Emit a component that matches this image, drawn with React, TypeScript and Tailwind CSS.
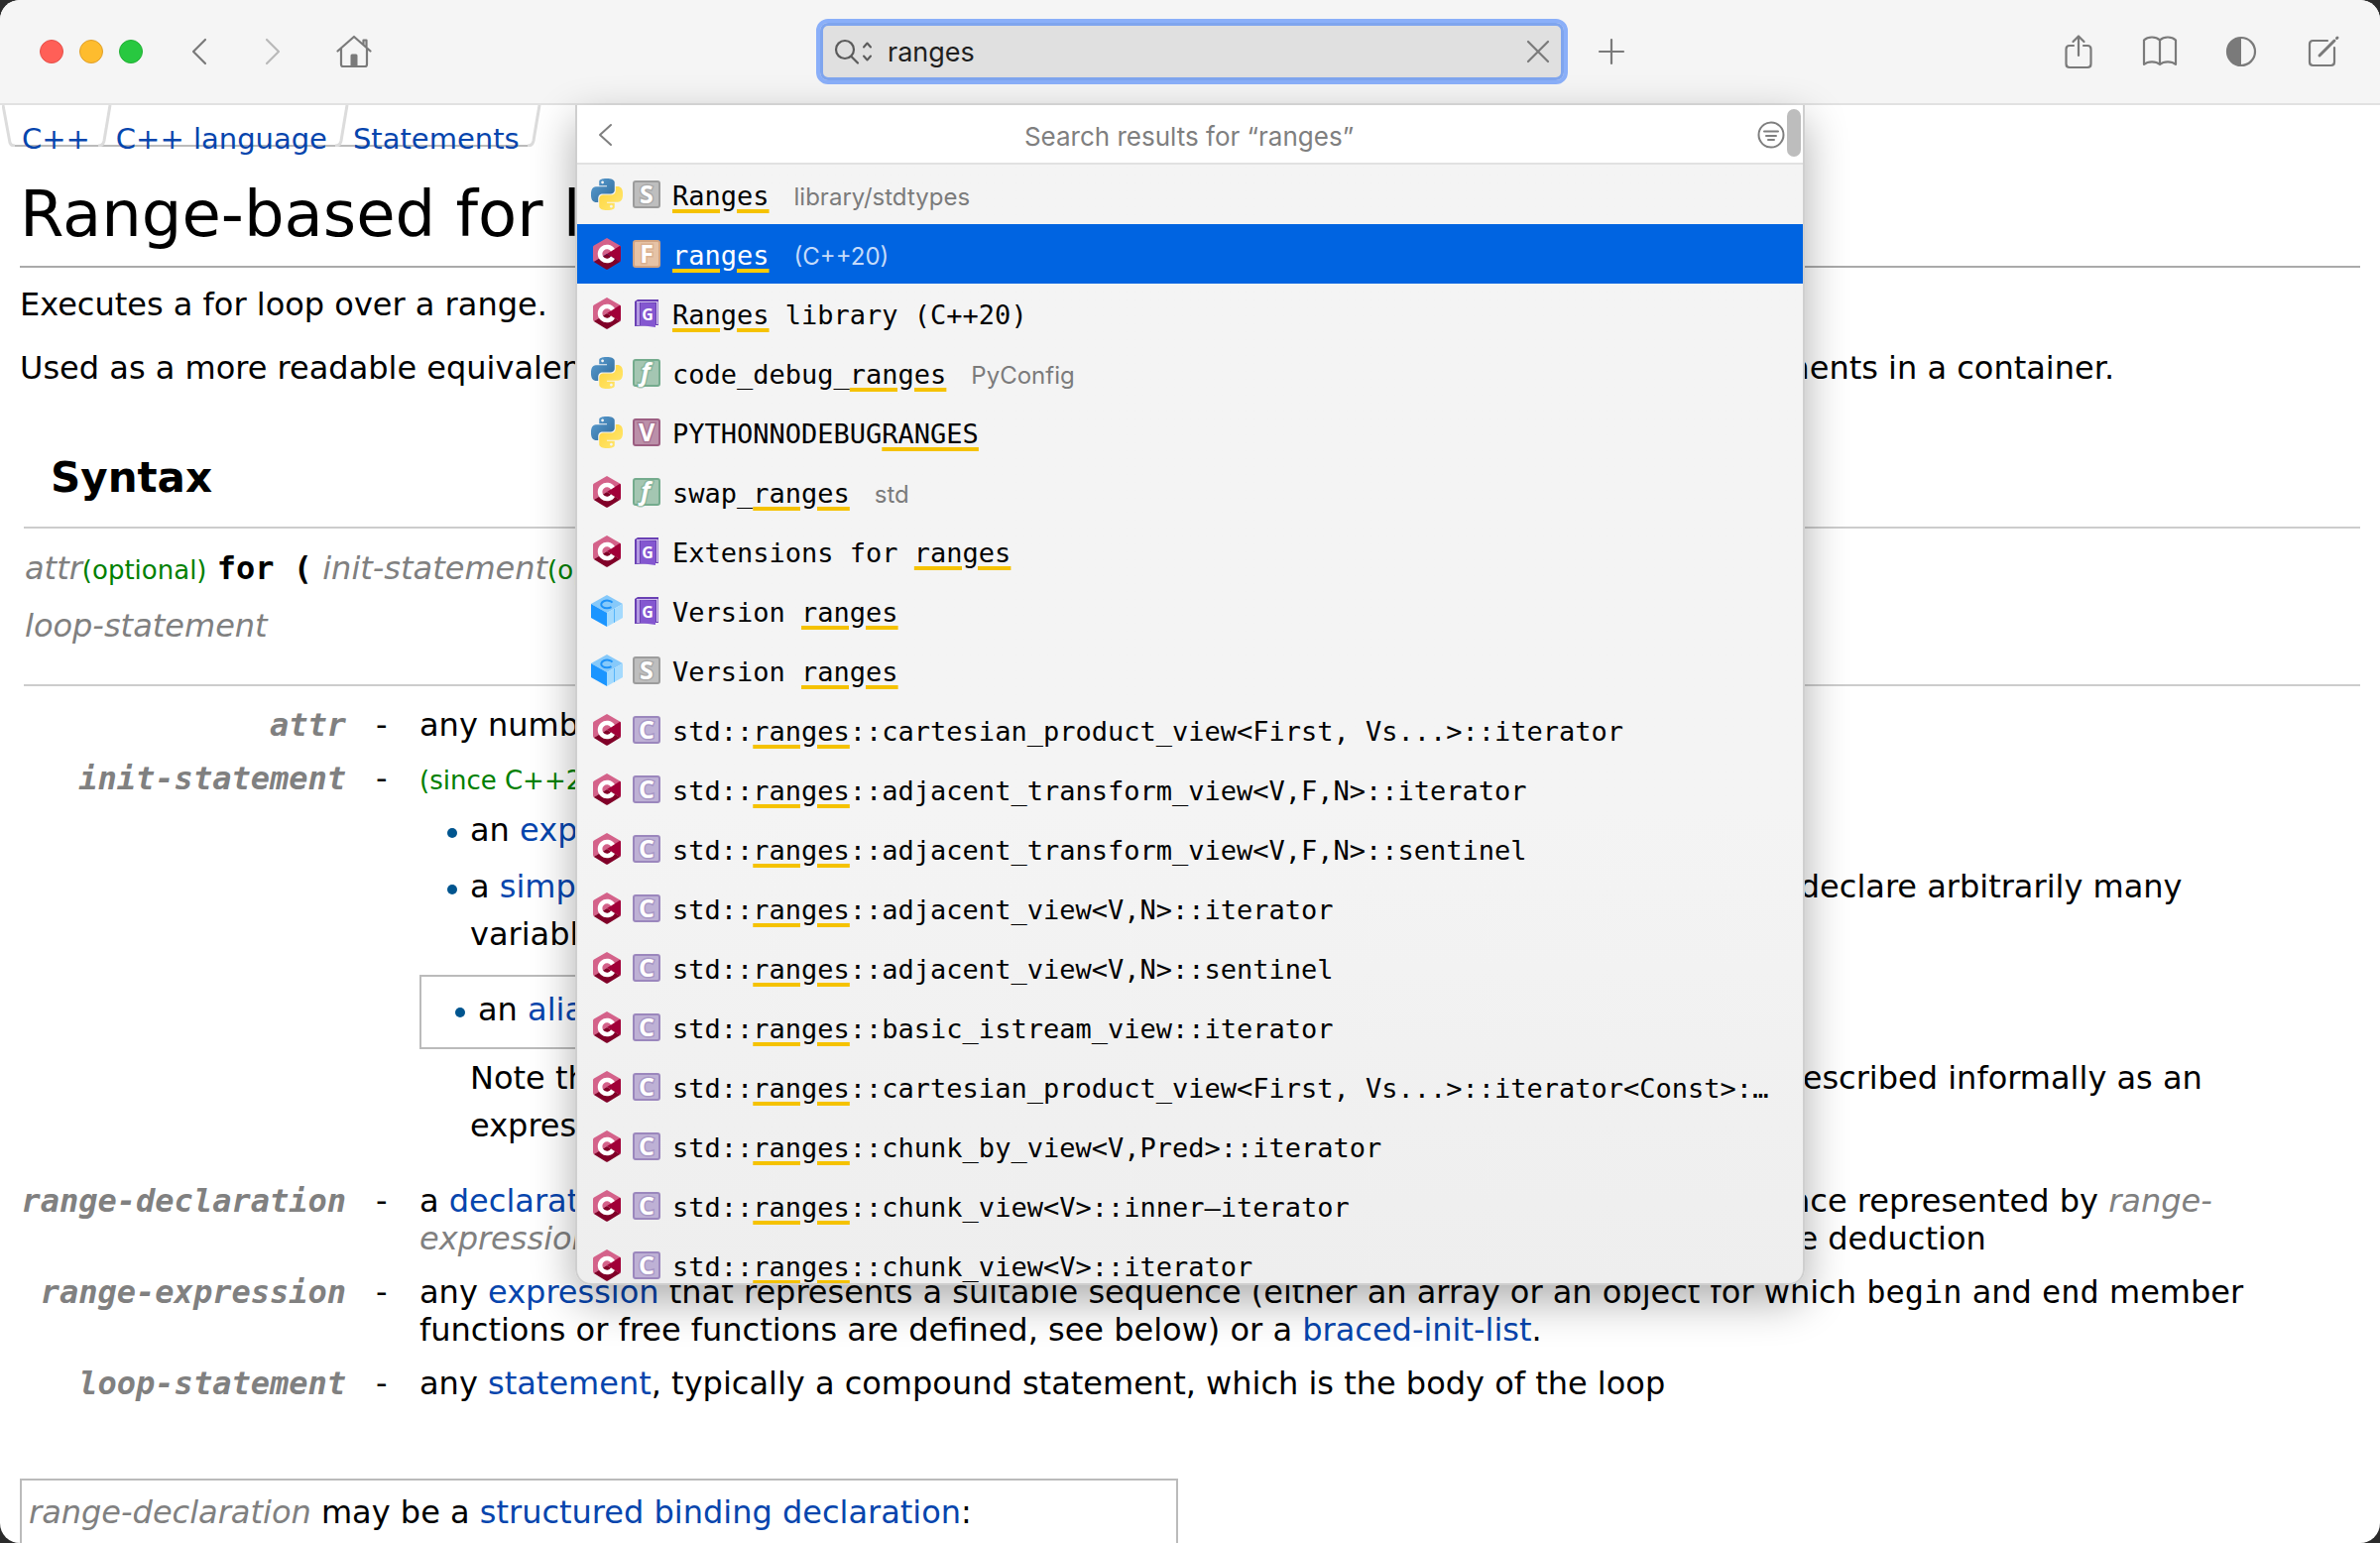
import React from "react";

type Lang = "py" | "cpp" | "cube";
type Kind = "S" | "F" | "G" | "f" | "V" | "C";
type Result = { lang: Lang; kind: Kind; before?: string; hit: string; after?: string; note?: string };

const RESULTS: Result[] = [
  { lang: "py", kind: "S", hit: "Ranges", note: "library/stdtypes" },
  { lang: "cpp", kind: "F", hit: "ranges", note: "(C++20)" },
  { lang: "cpp", kind: "G", hit: "Ranges", after: " library (C++20)" },
  { lang: "py", kind: "f", before: "code_debug_", hit: "ranges", note: "PyConfig" },
  { lang: "py", kind: "V", before: "PYTHONNODEBUG", hit: "RANGES" },
  { lang: "cpp", kind: "f", before: "swap_", hit: "ranges", note: "std" },
  { lang: "cpp", kind: "G", before: "Extensions for ", hit: "ranges" },
  { lang: "cube", kind: "G", before: "Version ", hit: "ranges" },
  { lang: "cube", kind: "S", before: "Version ", hit: "ranges" },
  { lang: "cpp", kind: "C", before: "std::", hit: "ranges", after: "::cartesian_product_view<First, Vs...>::iterator" },
  { lang: "cpp", kind: "C", before: "std::", hit: "ranges", after: "::adjacent_transform_view<V,F,N>::iterator" },
  { lang: "cpp", kind: "C", before: "std::", hit: "ranges", after: "::adjacent_transform_view<V,F,N>::sentinel" },
  { lang: "cpp", kind: "C", before: "std::", hit: "ranges", after: "::adjacent_view<V,N>::iterator" },
  { lang: "cpp", kind: "C", before: "std::", hit: "ranges", after: "::adjacent_view<V,N>::sentinel" },
  { lang: "cpp", kind: "C", before: "std::", hit: "ranges", after: "::basic_istream_view::iterator" },
  { lang: "cpp", kind: "C", before: "std::", hit: "ranges", after: "::cartesian_product_view<First, Vs...>::iterator<Const>:…" },
  { lang: "cpp", kind: "C", before: "std::", hit: "ranges", after: "::chunk_by_view<V,Pred>::iterator" },
  { lang: "cpp", kind: "C", before: "std::", hit: "ranges", after: "::chunk_view<V>::inner–iterator" },
  { lang: "cpp", kind: "C", before: "std::", hit: "ranges", after: "::chunk_view<V>::iterator" },
];

const SNAKE =
  "M14.25.18l.9.2.73.26.59.3.45.32.34.34.25.34.16.33.1.3.04.26.02.2-.01.13V8.5l-.05.63-.13.55-.21.46-.26.38-.3.31-.33.25-.35.19-.35.14-.33.1-.3.07-.26.04-.21.02H8.77l-.69.05-.59.14-.5.22-.41.27-.33.32-.27.35-.2.36-.15.37-.1.35-.07.32-.04.27-.02.21v3.06H3.17l-.21-.03-.28-.07-.32-.12-.35-.18-.36-.26-.36-.36-.35-.46-.32-.59-.28-.73-.21-.88-.14-1.05-.05-1.23.06-1.22.16-1.04.24-.87.32-.71.36-.57.4-.44.42-.33.42-.24.4-.16.36-.1.32-.05.24-.01h.16l.06.01h8.16v-.83H6.18l-.01-2.75-.02-.37.05-.34.11-.31.17-.28.25-.26.31-.23.38-.2.44-.18.51-.15.58-.12.64-.1.71-.06.77-.04.84-.02 1.27.05zm-6.3 1.98l-.23.33-.08.41.08.41.23.34.33.22.41.09.41-.09.33-.22.23-.34.08-.41-.08-.41-.23-.33-.33-.22-.41-.09-.41.09z";

function LangIcon({ lang }: { lang: Lang }) {
  if (lang === "py")
    return (
      <svg className="size-8 shrink-0" viewBox="0 0 24 24" aria-hidden="true">
        <defs>
          <linearGradient id="pyBlue" x1="0" y1="0" x2="1" y2="1">
            <stop offset="0" stopColor="#5a9fd4" />
            <stop offset="1" stopColor="#306998" />
          </linearGradient>
          <linearGradient id="pyYellow" x1="1" y1="1" x2="0" y2="0">
            <stop offset="0" stopColor="#ffd43b" />
            <stop offset="1" stopColor="#ffe873" />
          </linearGradient>
        </defs>
        <path d={SNAKE} fill="url(#pyBlue)" />
        <path d={SNAKE} fill="url(#pyYellow)" transform="rotate(180 12 12)" />
      </svg>
    );
  if (lang === "cpp")
    return (
      <svg className="size-8 shrink-0" viewBox="0 0 32 32" aria-hidden="true">
        <path d="M16 0 29 7.400Q30 8 30 9V16L16 16 3 24Q2 23.500 2 22V9Q2 8 3 7.400Z" fill="#d4628a" />
        <path d="M29.200 7.800Q30 8.500 30 9.500V22Q30 23.500 29.200 24.200L16 16Z" fill="#a10038" />
        <path d="M2.800 24 16 16 29.200 24 17 31.600Q16 32 15 31.600Z" fill="#800028" />
        <path d="M22 12.300A7 7 0 1 0 22 19.700" fill="none" stroke="#fff" strokeWidth="4.600" />
      </svg>
    );
  return (
    <svg className="size-8 shrink-0" viewBox="0 0 32 32" aria-hidden="true">
      <path d="M16 0 32 9 16 18 0 9Z" fill="#86c9fa" />
      <path d="M0 9 16 18V32L0 23Z" fill="#1b95ff" />
      <path d="M16 18 32 9V23L16 32Z" fill="#a5dafd" />
      <path d="M23.500 13.800V27.800" stroke="#57b6fa" strokeWidth="1" />
      <path d="M20.500 12.200A6 3.900 0 1 1 21.500 7.600" fill="none" stroke="#1d92f8" strokeWidth="2" />
    </svg>
  );
}

const BADGE: Record<Exclude<Kind, "G">, { fill: string; edge: string }> = {
  S: { fill: "#bebebe", edge: "#9c9c9c" },
  F: { fill: "#e6c3a6", edge: "#d2a482" },
  f: { fill: "#a4c6b2", edge: "#74ab8d" },
  V: { fill: "#bb90a9", edge: "#9c5e82" },
  C: { fill: "#beb1d5", edge: "#9b87bd" },
};

function KindIcon({ kind }: { kind: Kind }) {
  if (kind === "G")
    return (
      <svg className="size-7 shrink-0 overflow-visible" viewBox="0 0 28 28" aria-hidden="true">
        <path d="M2 2 5 0H26V26H23L2 27Z" fill="#6a40b4" />
        <path d="M24 2H25.500V25H24Z" fill="#d9ccef" />
        <path d="M4 3H7V26H4Z" fill="#b59be2" />
        <path d="M4 2H24V3H4Z" fill="#cdbcec" />
        <path d="M8 3 23 4V28L8 26Z" fill="#8457d0" />
        <text x="15" y="21" textAnchor="middle" fontFamily="Open Sans, sans-serif" fontWeight="700" fontSize="16" fill="#fff">
          G
        </text>
      </svg>
    );
  const { fill, edge } = BADGE[kind];
  return (
    <svg className="size-7 shrink-0 overflow-visible" viewBox="0 0 28 28" aria-hidden="true">
      <rect x="1" y="1" width="26" height="26" rx="2" fill={fill} stroke={edge} strokeWidth="2" />
      <text
        x={kind === "f" ? 13 : 14}
        y={kind === "f" ? 22 : 23}
        textAnchor="middle"
        fontFamily="Open Sans, sans-serif"
        fontWeight="700"
        fontSize="25"
        fontStyle={kind === "f" ? "italic" : "normal"}
        fill="#fff"
        stroke={edge}
        strokeWidth="3"
        strokeOpacity="0.6"
        paintOrder="stroke"
      >
        {kind}
      </text>
    </svg>
  );
}

function ResultRow({ item, selected }: { item: Result; selected: boolean }) {
  return (
    <li>
      <button
        type="button"
        className={
          "flex h-[60px] w-full items-center pl-3.5 pr-4 text-left " +
          (selected ? "bg-[#0064e1] text-white" : "text-black")
        }
      >
        <LangIcon lang={item.lang} />
        <span className="ml-2.5 mr-3 flex">
          <KindIcon kind={item.kind} />
        </span>
        <span className="flex items-baseline pt-1">
          <span className="whitespace-pre font-['DejaVu_Sans_Mono',monospace] text-[27px] leading-8">
            {item.before}
            <span
              className={
                "underline decoration-4 underline-offset-4 " +
                (selected ? "decoration-[#ffcc00]" : "decoration-[#f5c200]")
              }
            >
              {item.hit}
            </span>
            {item.after}
          </span>
          {item.note && (
            <span className={"ml-[25px] text-2xl leading-8 " + (selected ? "text-[#c5dbfa]" : "text-[#7b7b7b]")}>
              {item.note}
            </span>
          )}
        </span>
      </button>
    </li>
  );
}

function Results() {
  return (
    <section
      aria-label="Search results"
      className="absolute left-1/2 top-0 z-10 h-[1190px] w-[1240px] -translate-x-1/2 overflow-hidden rounded-b-2xl border-2 border-t-0 border-[#cfcfcf] bg-linear-to-b from-[#f4f4f4] from-60% to-[#eeeeee] font-[Inter,sans-serif] shadow-[0_16px_44px_rgba(0,0,0,0.32)]"
    >
      <header className="flex h-[60px] items-center justify-between border-b-2 border-[#e1e1e1] bg-white pl-5 pr-[18px] pt-0.5 text-[#7f7f7f]">
        <button type="button" aria-label="Back" className="w-6">
          <svg className="h-6 w-4" viewBox="0 0 16 24" fill="none" stroke="currentColor" strokeWidth="2" strokeLinecap="round" strokeLinejoin="round">
            <path d="M14 2 3 12 14 22" />
          </svg>
        </button>
        <h2 className="pt-0.5 text-[26px]">Search results for “ranges”</h2>
        <button type="button" aria-label="Filter">
          <svg className="size-7" viewBox="0 0 28 28" fill="none" stroke="currentColor" strokeWidth="2" strokeLinecap="round">
            <circle cx="14" cy="14" r="12.500" />
            <path d="M7 10.500H21M9 15H19M11 19H17" />
          </svg>
        </button>
      </header>
      <ul>
        {RESULTS.map((item, i) => (
          <ResultRow key={i} item={item} selected={i === 1} />
        ))}
      </ul>
      <div className="absolute right-0.5 top-1 h-12 w-3.5 rounded-full bg-[#bdbdbd]" />
    </section>
  );
}

const stroke = { fill: "none", stroke: "currentColor", strokeWidth: 2.2, strokeLinecap: "round", strokeLinejoin: "round" } as const;

function Toolbar() {
  return (
    <header className="grid h-[106px] grid-cols-[1fr_auto_1fr] items-center border-b-2 border-[#e1e1e1] bg-[#f5f5f5] pl-10 pr-9 text-[#7a7a7a]">
      <div className="flex items-center">
        <div className="flex gap-4">
          <button type="button" aria-label="Close" className="size-6 rounded-full border border-[#e5504a] bg-[#ff5f57]" />
          <button type="button" aria-label="Minimize" className="size-6 rounded-full border border-[#e0a02b] bg-[#febc2e]" />
          <button type="button" aria-label="Zoom" className="size-6 rounded-full border border-[#22b035] bg-[#28c840]" />
        </div>
        <button type="button" aria-label="Back" className="ml-[49px]">
          <svg className="h-7 w-4" viewBox="0 0 16 28" {...stroke}>
            <path d="M14 2 2 14 14 26" />
          </svg>
        </button>
        <button type="button" aria-label="Forward" className="ml-[58px] text-[#b9b9b9]">
          <svg className="h-7 w-4" viewBox="0 0 16 28" {...stroke}>
            <path d="M2 2 14 14 2 26" />
          </svg>
        </button>
        <button type="button" aria-label="Home" className="ml-14">
          <svg className="size-9" viewBox="0 0 36 36" {...stroke}>
            <path d="M1.500 17.500 18 3 34.500 17.500M5 15V31Q5 33 7 33H29Q31 33 31 31V15M27.500 11V6.500H30.500V14" />
            <path d="M14.500 33V22Q14.500 20.500 16 20.500H20Q21.500 20.500 21.500 22V33Z" fill="currentColor" stroke="none" />
          </svg>
        </button>
      </div>
      <div className="flex h-[66px] w-[758px] items-center rounded-xl border-4 border-[#8aaff9] bg-[#e0e0e0] px-3.5 ring-3 ring-inset ring-[#7fa5ee]">
        <label htmlFor="search" aria-label="Search" className="flex items-center">
          <svg className="h-7 w-10 text-[#5b5b5b]" viewBox="0 0 40 28" {...stroke}>
            <circle cx="11" cy="12" r="9" />
            <path d="M17.500 19 24 25.500" />
            <path d="M30 9.500 33.500 5.500 37 9.500M30 18.500 33.500 22.500 37 18.500" strokeWidth="2" />
          </svg>
        </label>
        <input
          id="search"
          type="text"
          defaultValue="ranges"
          className="ml-3.5 min-w-0 flex-1 bg-transparent pt-0.5 font-[Inter,sans-serif] text-[27px] text-[#1f1f1f] outline-none"
        />
        <button type="button" aria-label="Clear">
          <svg className="size-6" viewBox="0 0 24 24" {...stroke}>
            <path d="M2 2 22 22M22 2 2 22" />
          </svg>
        </button>
      </div>
      <div className="flex items-center justify-between pl-[30px] pr-1">
        <button type="button" aria-label="New tab">
          <svg className="size-7" viewBox="0 0 28 28" {...stroke}>
            <path d="M14 2V26M2 14H26" />
          </svg>
        </button>
        <div className="flex items-center gap-[46px]">
          <button type="button" aria-label="Share">
            <svg className="size-9" viewBox="0 0 36 36" {...stroke}>
              <path d="M13 12H9Q5.500 12 5.500 15.500V30.500Q5.500 34 9 34H27Q30.500 34 30.500 30.500V15.500Q30.500 12 27 12H23M18 22V3M12.500 8 18 2.500 23.500 8" />
            </svg>
          </button>
          <button type="button" aria-label="Library">
            <svg className="size-9" viewBox="0 0 36 36" {...stroke}>
              <path d="M18 6.500C14 2.500 6 2.500 2 6.500V31C6 27.500 14 27.500 18 31M18 6.500C22 2.500 30 2.500 34 6.500V31C30 27.500 22 27.500 18 31ZV31" />
            </svg>
          </button>
          <button type="button" aria-label="Appearance">
            <svg className="size-9" viewBox="0 0 36 36" {...stroke}>
              <circle cx="18" cy="18" r="14" />
              <path d="M18 4A14 14 0 0 0 18 32Z" fill="currentColor" stroke="none" />
            </svg>
          </button>
          <button type="button" aria-label="Compose">
            <svg className="size-9" viewBox="0 0 36 36" {...stroke}>
              <path d="M23 7H8.500Q5 7 5 10.500V28.500Q5 32 8.500 32H26.500Q30 32 30 28.500V14" />
              <path d="M15 22 30 7" strokeWidth="3" />
              <path d="M32.500 4.500 33 4" strokeWidth="3" />
            </svg>
          </button>
        </div>
      </div>
    </header>
  );
}

function Link({ children }: { children: React.ReactNode }) {
  return (
    <a href="#" className="text-[#0645ad]">
      {children}
    </a>
  );
}
function Small({ children }: { children: React.ReactNode }) {
  return <span className="text-[26px] leading-none text-[#008000]">{children}</span>;
}
function Par({ children }: { children: React.ReactNode }) {
  return <i className="text-[#808080]">{children}</i>;
}
function Code({ children }: { children: React.ReactNode }) {
  return <code className="font-['DejaVu_Sans_Mono',monospace] leading-none">{children}</code>;
}

function Tabs() {
  return (
    <nav className="-ml-5 flex h-[42px] pl-0.5 text-[29px] leading-[34px]">
      <svg className="-mr-1 h-[42px] w-6 shrink-0" viewBox="0 0 24 42" fill="none">
        <path d="M1 0 8 38Q9 41 13 41" stroke="#dcdcdc" strokeWidth="3" />
        <path d="M13 41H24" stroke="#bbb" strokeWidth="2" />
      </svg>
      {["C++", "C++ language", "Statements"].map((t, i) => (
        <React.Fragment key={t}>
          <a href="#" className="h-[42px] whitespace-nowrap border-b-2 border-[#bbb] pt-[17px] text-[#0645ad]">
            {t}
          </a>
          <svg className="h-[42px] w-[26px] shrink-0" viewBox="0 0 26 42" fill="none">
            <path d={i < 2 ? "M0 41H26" : "M0 41H10"} stroke="#bbb" strokeWidth="2" />
            <path d="M20 0 14 36Q13 41 8 41" stroke="#dcdcdc" strokeWidth="3" />
          </svg>
        </React.Fragment>
      ))}
    </nav>
  );
}

function Bullet({ children }: { children: React.ReactNode }) {
  return (
    <li className="flex">
      <span className="mr-[13px] mt-[22px] size-2.5 shrink-0 rounded-full bg-[#00558f]" />
      <div>{children}</div>
    </li>
  );
}

function Param({ name, children }: { name: string; children: React.ReactNode }) {
  return (
    <tr className="align-top">
      <th scope="row" className="whitespace-nowrap py-2 text-right font-['DejaVu_Sans_Mono',monospace] font-bold italic text-[#808080]">
        {name}
      </th>
      <td className="py-2 pl-[30px]">-</td>
      <td className="py-2">{children}</td>
    </tr>
  );
}

export default function App() {
  return (
    <div className="h-screen overflow-hidden bg-[#2b2b2b]">
      <div className="flex h-full flex-col overflow-hidden rounded-[20px] bg-white">
        <Toolbar />
        <div className="relative min-h-0 flex-1">
          <Results />
          <main className="h-full overflow-hidden px-5 font-['DejaVu_Sans',sans-serif] text-[32px] leading-[38px] text-black">
            <Tabs />
            <h1 className="mt-[31px] border-b-2 border-[#aaa] pb-3.5 text-[64px] leading-[75px]">
              Range-based for loop <Small>(since C++11)</Small>
            </h1>
            <p className="mt-[13px] leading-[48px]">Executes a for loop over a range.</p>
            <p className="mt-4 leading-[48px]">
              Used as a more readable equivalent to the traditional for loop operating over a range of values, such as
              all elements in a container.
            </p>
            <h3 className="mt-[62px] pl-[31px] text-[42px] font-bold leading-[49px]">Syntax</h3>
            <div className="ml-1 mt-[25px] border-y-2 border-[#ccc] pb-[30px] pl-px pt-[11px] leading-[58px]">
              <p>
                <Par>attr</Par>
                <Small>(optional)</Small> <b><Code>for (</Code></b> <Par>init-statement</Par>
                <Small>(optional)</Small> <Par>range-declaration</Par> <b><Code>:</Code></b> <Par>range-expression</Par>{" "}
                <b><Code>)</Code></b>
              </p>
              <p>
                <Par>loop-statement</Par>
              </p>
            </div>
            <table className="mt-3 w-full table-fixed">
              <colgroup>
                <col className="w-[329px]" />
                <col className="w-[74px]" />
                <col />
              </colgroup>
              <tbody>
                <Param name="attr">any number of attributes</Param>
                <Param name="init-statement">
                  <p>
                    <Small>(since C++20)</Small> one of
                  </p>
                  <ul className="mt-[9px] space-y-[9px] pl-7 pr-10 leading-[48px]">
                    <Bullet>
                      an <Link>expression statement</Link> (which may be a null statement ;)
                    </Bullet>
                    <Bullet>
                      a <Link>simple declaration</Link>, typically a declaration of a variable with initializer, but it
                      may declare arbitrarily many variables or be a structured binding declaration
                    </Bullet>
                  </ul>
                  <ul className="mt-[17px] w-[900px] border-2 border-[#bbb] pb-3.5 pl-[34px] pt-[9px] leading-[48px]">
                    <Bullet>
                      an <Link>alias-declaration</Link> <Small>(since C++23)</Small>
                    </Bullet>
                  </ul>
                  <p className="mt-[5px] pb-[17px] pl-[51px] leading-[48px]">
                    Note that any <Par>init-statement</Par> must end with a semicolon <Code>;</Code>, which is why it is
                    often described informally as an expression or a declaration followed by a semicolon.
                  </p>
                </Param>
                <Param name="range-declaration">
                  a <Link>declaration</Link> of a named variable, whose type is the type of the element of the sequence
                  represented by <Par>range-expression</Par>, or a reference to that type. Often uses the auto specifier
                  for automatic type deduction
                </Param>
                <Param name="range-expression">
                  any <Link>expression</Link> that represents a suitable sequence (either an array or an object for
                  which <Code>begin</Code> and <Code>end</Code> member functions or free functions are defined, see
                  below) or a <Link>braced-init-list</Link>.
                </Param>
                <Param name="loop-statement">
                  any <Link>statement</Link>, typically a compound statement, which is the body of the loop
                </Param>
              </tbody>
            </table>
            <p className="mt-[69px] h-24 w-fit border-2 border-[#bbb] pl-[7px] pr-[206px] pt-2 leading-[48px]">
              <Par>range-declaration</Par> may be a <Link>structured binding declaration</Link>:
            </p>
          </main>
        </div>
      </div>
    </div>
  );
}
